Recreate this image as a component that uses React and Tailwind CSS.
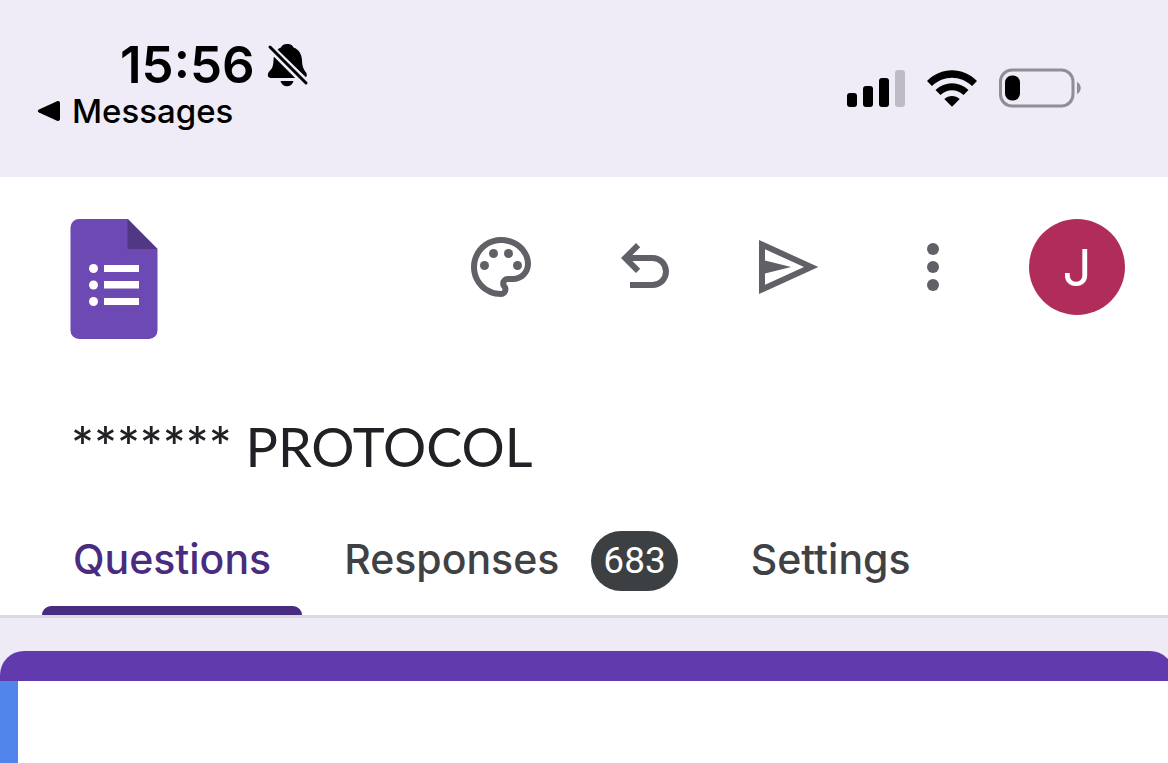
const headerActions = [
  { label: "Customize theme", Icon: PaletteIcon },
  { label: "Undo", Icon: UndoIcon },
  { label: "Send", Icon: SendIcon },
  { label: "More options", Icon: MoreIcon },
];

const tabs = [
  { id: "questions", label: "Questions", active: true },
  { id: "responses", label: "Responses", count: 683 },
  { id: "settings", label: "Settings" },
];

function PaletteIcon() {
  return (
    <svg viewBox="0 0 24 24" className="size-18" fill="currentColor">
      <path d="M12 22C6.49 22 2 17.51 2 12S6.49 2 12 2s10 4.04 10 9c0 3.31-2.69 6-6 6h-1.77c-.28 0-.5.22-.5.5 0 .12.05.23.13.33.41.47.64 1.06.64 1.67A2.5 2.5 0 0 1 12 22zm0-18c-4.41 0-8 3.59-8 8s3.59 8 8 8c.28 0 .5-.22.5-.5a.54.54 0 0 0-.14-.35c-.41-.46-.63-1.05-.63-1.65a2.5 2.5 0 0 1 2.5-2.5H16c2.21 0 4-1.79 4-4 0-3.86-3.59-7-8-7z" />
      <circle cx="6.5" cy="11.5" r="1.5" />
      <circle cx="9.5" cy="7.5" r="1.5" />
      <circle cx="14.5" cy="7.5" r="1.5" />
      <circle cx="17.5" cy="11.5" r="1.5" />
    </svg>
  );
}

function UndoIcon() {
  return (
    <svg viewBox="0 0 24 24" className="size-18" fill="currentColor">
      <path d="M7 19v-2h7.5a3.5 3.5 0 0 0 0-7H7.8l2.6 2.6L9 14 4 9l5-5 1.4 1.4L7.8 8h6.7a5.5 5.5 0 0 1 0 11z" />
    </svg>
  );
}

function SendIcon() {
  return (
    <svg viewBox="0 0 24 24" className="size-18" fill="currentColor">
      <path
        fillRule="evenodd"
        d="M2 3v18l19.8-9zM4 6.1v3.7l8.7 2.2L4 14.2v3.7L17 12z"
      />
    </svg>
  );
}

function MoreIcon() {
  return (
    <svg viewBox="0 0 24 24" className="size-18" fill="currentColor">
      <circle cx="12" cy="6" r="2" />
      <circle cx="12" cy="12" r="2" />
      <circle cx="12" cy="18" r="2" />
    </svg>
  );
}

function FormsLogo() {
  return (
    <svg viewBox="0 0 88 120" className="h-30 w-22">
      <path
        fill="#6d4ab3"
        d="M9 0h49l29.5 30v81.5A8.5 8.5 0 0 1 79 120H9a8.5 8.5 0 0 1-8.5-8.5v-103A8.5 8.5 0 0 1 9 0z"
      />
      <path fill="#523785" d="M57.5 0v30h30z" />
      <g fill="#fff">
        <circle cx="23.5" cy="49.5" r="4.5" />
        <circle cx="23.5" cy="66" r="4.5" />
        <circle cx="23.5" cy="82.5" r="4.5" />
        <path d="M34 46h35v7H34zM34 62h35v7.5H34zM34 79h35v7H34z" />
      </g>
    </svg>
  );
}

function SilentIcon() {
  return (
    <svg viewBox="0 0 42 44" className="h-11 w-[42px]">
      <path d="M20 1c4 0 5.5 1.5 6.5 3.5 5.5 2 8 6.5 8.5 12.5.3 7 1.5 9 4 12.5 1.5 2 1 5.5-2 5.5H4c-3 0-4-3-2.5-5.5C5 25.5 6.3 24 6.5 17 7 11 9 6.5 14 4.5 15 2.5 16.500 1 20 1z" />
      <path d="M13.5 38h13c-1 3.5-3.5 5.2-6.5 5.2s-5.5-1.7-6.5-5.2z" />
      <path d="M1 5 38 42M2 1l39 38" stroke="#efebf7" strokeWidth="4" />
      <path d="m3 4 36 36" stroke="#000" strokeWidth="3" strokeLinecap="round" />
    </svg>
  );
}

function SignalIcon() {
  return (
    <svg viewBox="0 0 58 38" className="h-[38px] w-[58px]">
      <rect x="0" y="24" width="10" height="14" rx="3" />
      <rect x="16" y="17" width="10" height="21" rx="3" />
      <rect x="32" y="9" width="10" height="29" rx="3" />
      <rect x="48" y="1" width="10" height="37" rx="3" fill="#bfbbc6" />
    </svg>
  );
}

function WifiIcon() {
  return (
    <svg viewBox="0 0 50 38" className="h-[38px] w-[50px]">
      <path d="M0 12C14-2.5 36-2.5 50 12l-5 5C33.5 6 16.5 6 5 17z" />
      <path d="M8.5 21c9.5-9 23.5-9 33 0l-5 5c-6.5-6.5-16.5-6.5-23 0z" />
      <path d="M17.3 30c4.4-4 11-4 15.4 0L25 37.8z" />
    </svg>
  );
}

function BatteryIcon() {
  return (
    <svg viewBox="0 0 82 40" className="h-10 w-[82px]">
      <rect x="1.5" y="2" width="72.5" height="36" rx="11.5" fill="none" stroke="#918d97" strokeWidth="3" />
      <path d="M78 14c5 2 5 10 0 12z" fill="#918d97" />
      <rect x="6" y="7.5" width="15" height="25" rx="7" />
    </svg>
  );
}

function StatusBar() {
  return (
    <div className="flex h-[177px] items-start justify-between bg-[#efebf7] pr-[87px] pl-[37px] font-['Inter',sans-serif] text-black">
      <div className="pt-[39px]">
        <div className="flex items-center gap-3 pl-[83px]">
          <span className="text-[51px] leading-[52px] font-semibold">15:56</span>
          <SilentIcon />
        </div>
        <button type="button" className="flex items-center gap-[11px] text-[33px] leading-10 font-medium">
          <svg viewBox="0 0 24 22" className="h-[22px] w-6">
            <path d="M2 9.5 20 1.3c1.8-.7 3 .3 3 2v15.400c0 1.700-1.200 2.700-3 2L2 12.500c-1.700-.9-1.700-2.100 0-3z" />
          </svg>
          Messages
        </button>
      </div>
      <div className="flex items-center gap-[22px] pt-17">
        <SignalIcon />
        <WifiIcon />
        <BatteryIcon />
      </div>
    </div>
  );
}

function App() {
  return (
    <div className="flex min-h-screen flex-col overflow-x-hidden bg-[#eeeaf6] font-['Lato',sans-serif]">
      <StatusBar />

      <header className="border-b-3 border-[#dbd8e0] bg-white">
        {/* Toolbar */}
        <div className="flex items-start justify-between pt-[42px] pr-[43px] pl-[70px]">
          <a href="#" aria-label="Forms home">
            <FormsLogo />
          </a>
          <div className="flex gap-12 text-[#5f6167]">
            {headerActions.map(({ label, Icon }) => (
              <button
                key={label}
                type="button"
                aria-label={label}
                className="flex size-24 items-center justify-center"
              >
                <Icon />
              </button>
            ))}
            <button
              type="button"
              aria-label="Account"
              className="size-24 rounded-full bg-[#b02d5b] font-['Inter',sans-serif] text-[51px] leading-none text-white"
            >
              J
            </button>
          </div>
        </div>

        <h1 className="px-[71px] pt-[72px] text-[54px] leading-[72px] text-[#202124]">
          <span className="font-semibold">*******</span> PROTOCOL
        </h1>

        {/* Tabs */}
        <nav className="flex gap-[11px] px-[42px] pt-12">
          {tabs.map((tab) => (
            <a
              key={tab.id}
              href={"#" + tab.id}
              className={
                "relative flex h-[84px] items-start px-[31px] font-['Inter',sans-serif] text-[41px] leading-[56px] font-medium " +
                (tab.active ? "text-[#482c80]" : "text-[#3f4144]")
              }
            >
              {tab.label}
              {tab.count && (
                <span className="ml-8 flex h-[60px] items-center rounded-[30px] bg-[#3c4043] px-3 font-['Roboto',sans-serif] text-[37px] font-normal text-white">
                  {tab.count}
                </span>
              )}
              {tab.active && (
                <span className="absolute inset-x-0 bottom-0 h-[9px] rounded-t-[9px] bg-[#482c80]" />
              )}
            </a>
          ))}
        </nav>
      </header>

      {/* Form card */}
      <main className="mt-[33px] -mr-1.5 flex flex-1 flex-col overflow-hidden rounded-t-3xl bg-white">
        <div className="h-[30px] bg-[#613bae]" />
        <div className="flex-1 border-l-18 border-[#5185ec]" />
      </main>
    </div>
  );
}

export default App;
